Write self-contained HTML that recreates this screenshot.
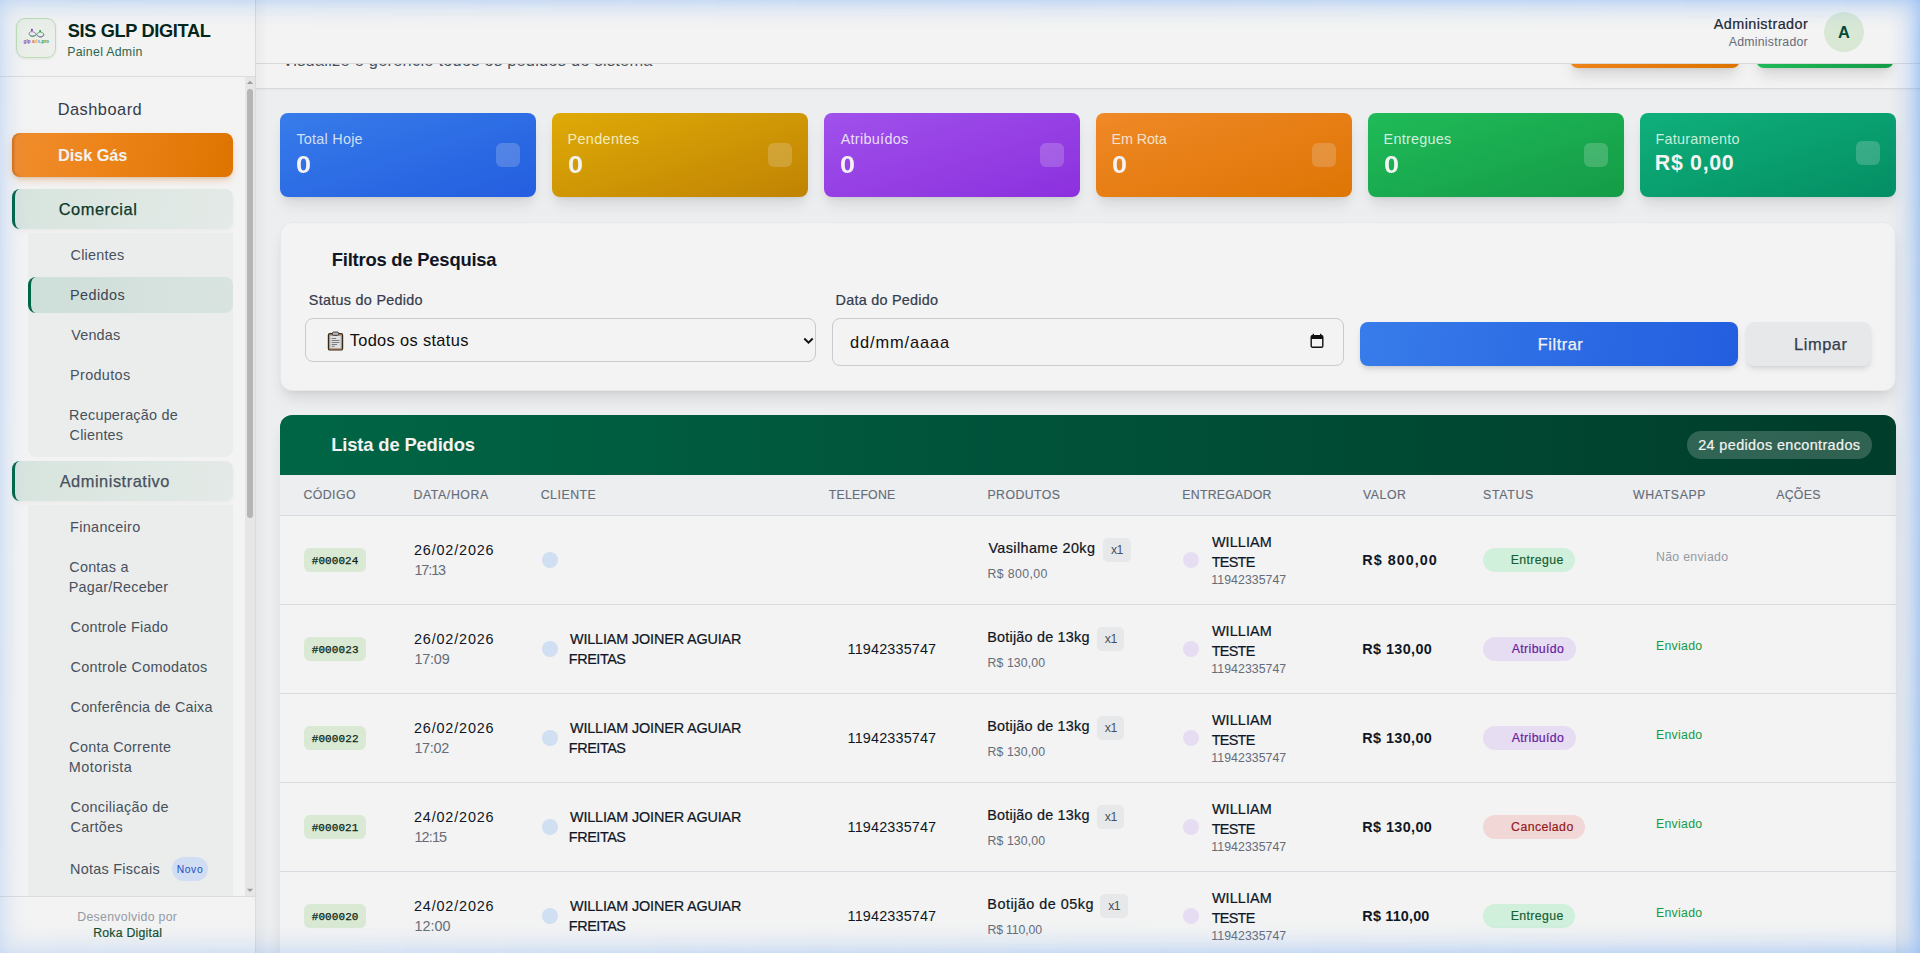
<!DOCTYPE html><html lang="pt-BR"><head><meta charset="utf-8"><title>SIS GLP DIGITAL - Pedidos</title><style>
html,body{margin:0;padding:0}
body{width:1920px;height:953px;overflow:hidden;position:relative;background:#f9fafb;font-family:"Liberation Sans",sans-serif}
aside div,section div,header div,main div,.ov{position:absolute;box-sizing:content-box}
.t{position:absolute;white-space:nowrap;margin:0;text-decoration:none;display:block;font-family:"Liberation Sans",sans-serif;font-weight:400;line-height:1}
.m{font-family:"Liberation Mono",monospace}
.ov{pointer-events:none}
</style></head><body><aside><div style="left:0px;top:0px;width:255px;height:953px;background:#fff;border-right:1px solid #e5e7eb;"></div><div style="left:0px;top:76px;width:255px;height:0px;border-top:1px solid #e5e7eb;"></div><div style="left:16px;top:18px;width:38px;height:38px;border:1px solid #c6e8bb;border-radius:9px;background:linear-gradient(135deg,#f4faf1,#f9fbf8);box-shadow:0 1px 3px rgba(0,0,0,.08);overflow:hidden;"><svg width="40" height="40" viewBox="0 0 40 40" style="position:absolute;left:-1px;top:-1px"><g fill="none" stroke-width=".85" opacity=".9"><path d="M20.5 16.3c-2.2-3-6.3-3.6-7.3-1.2-1 2.5 4.400 4.700 7.300 1.200z" stroke="#8a4fc0"/><path d="M13.3 16.600c1.500 3 6 1.800 7.200-.3" stroke="#2f9e57"/><path d="M20.500 16.300c2.200-3 6.300-2.600 7.300-.2 1 2.500-4.400 4.700-7.300.200z" stroke="#2f9e57"/><path d="M20.700 16.700c1.500 3.300 6.300 2.800 7.000-.3" stroke="#8a4fc0"/></g><circle cx="15.900" cy="11.900" r="1.050" fill="#7b3fb5"/><circle cx="24.100" cy="13" r="1.050" fill="#2f9e57"/><text x="7.600" y="24.900" font-family="Liberation Sans, sans-serif" font-weight="700" font-size="5.300" textLength="25.400" lengthAdjust="spacingAndGlyphs"><tspan fill="#8a4fc0">glp </tspan><tspan fill="#ef6b6b">a</tspan><tspan fill="#f0bd45">d</tspan><tspan fill="#62a3f0">s</tspan><tspan fill="#3aa35c">.pro</tspan></text></svg></div><h1 class="t" style="left:67.78px;top:21.50px;font-size:18.2px;font-weight:700;color:#06281d;letter-spacing:-0.342px;">SIS GLP DIGITAL</h1><span class="t" style="left:67.19px;top:45.90px;font-size:12.3px;color:#2d6a4f;letter-spacing:0.302px;">Painel Admin</span><a class="t" style="left:57.65px;top:100.70px;font-size:16.4px;color:#374151;letter-spacing:0.489px;">Dashboard</a><div style="left:12px;top:133px;width:221px;height:44px;border-radius:8px;background:linear-gradient(100deg,#fc9430 0%,#f98b1c 40%,#e97a00 100%);box-shadow:0 4px 8px -2px rgba(220,110,0,.35),0 2px 4px -2px rgba(0,0,0,.12),inset 3px 0 2px -1px rgba(200,95,0,.55);"></div><a class="t" style="left:57.90px;top:146.50px;font-size:16.4px;font-weight:700;color:#fff;letter-spacing:-0.086px;">Disk Gás</a><div style="left:12px;top:189px;width:218px;height:40px;border-radius:8px;border-left:3px solid #006b49;background:linear-gradient(100deg,#e2f0ea,#f0f6f3);box-shadow:0 2px 4px rgba(0,0,0,.04);"></div><a class="t" style="left:58.67px;top:201.00px;font-size:16.4px;color:#0a3b2a;-webkit-text-stroke:0.25px #0a3b2a;letter-spacing:0.544px;">Comercial</a><div style="left:28px;top:233px;width:205px;height:224px;background:#f7f9f8;border-radius:0 0 8px 8px;"></div><a class="t" style="left:70.57px;top:247.70px;font-size:14.4px;color:#4b5563;letter-spacing:0.222px;">Clientes</a><div style="left:28px;top:277px;width:202px;height:36px;border-radius:8px;border-left:3px solid #006b49;background:linear-gradient(100deg,#d9eae4,#e4f0eb);"></div><a class="t" style="left:70.12px;top:287.50px;font-size:14.4px;color:#3f4856;letter-spacing:0.414px;">Pedidos</a><a class="t" style="left:71.24px;top:327.70px;font-size:14.4px;color:#4b5563;letter-spacing:0.174px;">Vendas</a><a class="t" style="left:70.12px;top:367.50px;font-size:14.4px;color:#4b5563;letter-spacing:0.342px;">Produtos</a><a class="t" style="left:69.12px;top:407.80px;font-size:14.4px;color:#4b5563;letter-spacing:0.232px;">Recuperação de</a><a class="t" style="left:69.57px;top:427.50px;font-size:14.4px;color:#4b5563;letter-spacing:0.207px;">Clientes</a><div style="left:12px;top:461px;width:218px;height:40px;border-radius:8px;border-left:3px solid #006b49;background:linear-gradient(100deg,#e2f0ea,#f0f6f3);box-shadow:0 2px 4px rgba(0,0,0,.04);"></div><a class="t" style="left:59.67px;top:472.50px;font-size:16.4px;color:#4b5563;-webkit-text-stroke:0.25px #4b5563;letter-spacing:0.522px;">Administrativo</a><div style="left:28px;top:505px;width:205px;height:391px;background:#f7f9f8;"></div><a class="t" style="left:70.12px;top:519.50px;font-size:14.4px;color:#4b5563;letter-spacing:0.320px;">Financeiro</a><a class="t" style="left:69.27px;top:560.00px;font-size:14.4px;color:#4b5563;letter-spacing:0.232px;">Contas a</a><a class="t" style="left:68.82px;top:580.00px;font-size:14.4px;color:#4b5563;letter-spacing:0.210px;">Pagar/Receber</a><a class="t" style="left:70.57px;top:620.00px;font-size:14.4px;color:#4b5563;letter-spacing:0.227px;">Controle Fiado</a><a class="t" style="left:70.57px;top:660.00px;font-size:14.4px;color:#4b5563;letter-spacing:0.280px;">Controle Comodatos</a><a class="t" style="left:70.57px;top:700.00px;font-size:14.4px;color:#4b5563;letter-spacing:0.186px;">Conferência de Caixa</a><a class="t" style="left:69.27px;top:740.00px;font-size:14.4px;color:#4b5563;letter-spacing:0.252px;">Conta Corrente</a><a class="t" style="left:68.82px;top:760.00px;font-size:14.4px;color:#4b5563;letter-spacing:0.474px;">Motorista</a><a class="t" style="left:70.57px;top:799.80px;font-size:14.4px;color:#4b5563;letter-spacing:0.282px;">Conciliação de</a><a class="t" style="left:70.57px;top:819.80px;font-size:14.4px;color:#4b5563;letter-spacing:0.277px;">Cartões</a><a class="t" style="left:70.12px;top:861.70px;font-size:14.4px;color:#4b5563;letter-spacing:0.261px;">Notas Fiscais</a><div style="left:171.7px;top:857px;width:36px;height:24px;border-radius:12px;background:#dbe8fe;"></div><span class="t" style="left:176.66px;top:864.80px;font-size:10.3px;color:#2250d0;letter-spacing:0.644px;">Novo</span><div style="left:245px;top:77px;width:10px;height:819px;background:#f2f2f2;"></div><div style="left:247px;top:89px;width:6px;height:429px;background:#bebebe;border-radius:3px;"></div><svg style="position:absolute;left:246px;top:80px" width="8" height="5" viewBox="0 0 8 5"><path d="M0.800 4L4 .8 7.200 4z" fill="#a6a6a6"/></svg><svg style="position:absolute;left:246px;top:888px" width="8" height="5" viewBox="0 0 8 5"><path d="M0.800 .8L4 4 7.200 .8z" fill="#a6a6a6"/></svg><div style="left:0px;top:896px;width:255px;height:57px;background:#fff;border-top:1px solid #e5e7eb;box-sizing:border-box;"></div><span class="t" style="left:77.29px;top:910.70px;font-size:12.3px;color:#9ca3af;letter-spacing:0.307px;">Desenvolvido por</span><span class="t" style="left:93.19px;top:926.50px;font-size:12.3px;color:#14532d;-webkit-text-stroke:0.18px #14532d;letter-spacing:0.230px;">Roka Digital</span></aside><section><div style="left:256px;top:0px;width:1664px;height:88px;background:#fff;border-bottom:1px solid #e2e4e8;box-shadow:0 1px 2px rgba(0,0,0,.04);"></div><p class="t" style="left:282.43px;top:52.00px;font-size:16.4px;color:#4b5563;letter-spacing:0.242px;">Visualize e gerencie todos os pedidos do sistema</p><div style="left:1570px;top:20px;width:169.5px;height:47.8px;border-radius:8px;background:linear-gradient(100deg,#f98b1c,#e97a00);box-shadow:0 10px 15px -3px rgba(0,0,0,.12),0 4px 6px -4px rgba(0,0,0,.1);"></div><div style="left:1756px;top:20px;width:137.8px;height:47.8px;border-radius:8px;background:linear-gradient(100deg,#22c55e,#16a34a);box-shadow:0 10px 15px -3px rgba(0,0,0,.12),0 4px 6px -4px rgba(0,0,0,.1);"></div></section><header><div style="left:256px;top:0px;width:1664px;height:63px;background:#fff;border-bottom:1px solid #e2e4e8;"></div><span class="t" style="left:1713.77px;top:17.20px;font-size:14.4px;color:#1f2937;-webkit-text-stroke:0.22px #1f2937;letter-spacing:0.432px;">Administrador</span><span class="t" style="left:1728.68px;top:35.80px;font-size:12.3px;color:#6b7280;letter-spacing:0.264px;">Administrador</span><div style="left:1823.7px;top:12px;width:40px;height:40px;border-radius:50%;background:#e3f4e0;"></div><span class="t" style="left:1837.89px;top:24.00px;font-size:16.4px;font-weight:700;color:#064e3b;">A</span></header><main><div style="left:280px;top:113px;width:256px;height:84px;border-radius:8px;background:linear-gradient(to bottom right,#3b82f6,#2563eb);box-shadow:0 10px 15px -3px rgba(0,0,0,.1),0 4px 6px -4px rgba(0,0,0,.1);"></div><span class="t" style="left:296.38px;top:132.20px;font-size:14.4px;color:#dbeafe;letter-spacing:0.251px;">Total Hoje</span><span class="t" style="left:296.03px;top:153.00px;font-size:24.6px;font-weight:700;color:#fff;transform:scaleX(1.1);transform-origin:0 0;">0</span><div style="left:496px;top:143px;width:24px;height:24px;border-radius:6px;background:rgba(255,255,255,.2);"></div><div style="left:552px;top:113px;width:256px;height:84px;border-radius:8px;background:linear-gradient(to bottom right,#eab308,#ca8a04);box-shadow:0 10px 15px -3px rgba(0,0,0,.1),0 4px 6px -4px rgba(0,0,0,.1);"></div><span class="t" style="left:567.52px;top:132.20px;font-size:14.4px;color:#fef9c3;letter-spacing:0.361px;">Pendentes</span><span class="t" style="left:568.03px;top:153.00px;font-size:24.6px;font-weight:700;color:#fff;transform:scaleX(1.1);transform-origin:0 0;">0</span><div style="left:768px;top:143px;width:24px;height:24px;border-radius:6px;background:rgba(255,255,255,.2);"></div><div style="left:824px;top:113px;width:256px;height:84px;border-radius:8px;background:linear-gradient(to bottom right,#a855f7,#9333ea);box-shadow:0 10px 15px -3px rgba(0,0,0,.1),0 4px 6px -4px rgba(0,0,0,.1);"></div><span class="t" style="left:840.67px;top:132.20px;font-size:14.4px;color:#f3e8ff;letter-spacing:0.306px;">Atribuídos</span><span class="t" style="left:840.03px;top:153.00px;font-size:24.6px;font-weight:700;color:#fff;transform:scaleX(1.1);transform-origin:0 0;">0</span><div style="left:1040px;top:143px;width:24px;height:24px;border-radius:6px;background:rgba(255,255,255,.2);"></div><div style="left:1096px;top:113px;width:256px;height:84px;border-radius:8px;background:linear-gradient(to bottom right,#fc9029,#e97b05);box-shadow:0 10px 15px -3px rgba(0,0,0,.1),0 4px 6px -4px rgba(0,0,0,.1);"></div><span class="t" style="left:1111.52px;top:132.20px;font-size:14.4px;color:#ffedd5;letter-spacing:-0.134px;">Em Rota</span><span class="t" style="left:1112.03px;top:153.00px;font-size:24.6px;font-weight:700;color:#fff;transform:scaleX(1.1);transform-origin:0 0;">0</span><div style="left:1312px;top:143px;width:24px;height:24px;border-radius:6px;background:rgba(255,255,255,.2);"></div><div style="left:1368px;top:113px;width:256px;height:84px;border-radius:8px;background:linear-gradient(to bottom right,#22c55e,#16a34a);box-shadow:0 10px 15px -3px rgba(0,0,0,.1),0 4px 6px -4px rgba(0,0,0,.1);"></div><span class="t" style="left:1383.52px;top:132.20px;font-size:14.4px;color:#dcfce7;letter-spacing:0.262px;">Entregues</span><span class="t" style="left:1384.03px;top:153.00px;font-size:24.6px;font-weight:700;color:#fff;transform:scaleX(1.1);transform-origin:0 0;">0</span><div style="left:1584px;top:143px;width:24px;height:24px;border-radius:6px;background:rgba(255,255,255,.2);"></div><div style="left:1640px;top:113px;width:256px;height:84px;border-radius:8px;background:linear-gradient(to bottom right,#10b981,#059669);box-shadow:0 10px 15px -3px rgba(0,0,0,.1),0 4px 6px -4px rgba(0,0,0,.1);"></div><span class="t" style="left:1655.52px;top:132.20px;font-size:14.4px;color:#d1fae5;letter-spacing:0.249px;">Faturamento</span><span class="t" style="left:1654.87px;top:153.00px;font-size:21.4px;font-weight:700;color:#fff;letter-spacing:0.648px;">R$ 0,00</span><div style="left:1856px;top:141px;width:24px;height:24px;border-radius:6px;background:rgba(255,255,255,.2);"></div><div style="left:280px;top:221.5px;width:1614px;height:167px;border:1px solid #f3f4f6;border-radius:12px;background:#fff;box-shadow:0 10px 15px -3px rgba(0,0,0,.1),0 4px 6px -4px rgba(0,0,0,.08);"></div><h3 class="t" style="left:331.77px;top:250.50px;font-size:18.4px;font-weight:700;color:#111827;letter-spacing:-0.213px;">Filtros de Pesquisa</h3><label class="t" style="left:308.85px;top:293.00px;font-size:14.4px;color:#374151;-webkit-text-stroke:0.22px #374151;letter-spacing:0.277px;">Status do Pedido</label><label class="t" style="left:835.52px;top:293.00px;font-size:14.4px;color:#374151;-webkit-text-stroke:0.22px #374151;letter-spacing:0.259px;">Data do Pedido</label><div style="left:305px;top:318px;width:509px;height:42px;border:1px solid #d1d5db;border-radius:8px;background:#fff;"><svg style="position:absolute;left:21px;top:11.500px" width="17" height="20" viewBox="0 0 17 20"><rect x="1.400" y="2.600" width="14.200" height="16.400" rx="1.600" fill="#c9a27a" stroke="#3a2919" stroke-width="1.200"/><rect x="3" y="4.600" width="11" height="12.800" fill="#ececec" stroke="#8a8a8a" stroke-width=".4"/><rect x="5.400" y="1" width="6.200" height="3.400" rx="1.200" fill="#bdbdbd" stroke="#3a3a3a" stroke-width=".9"/><path d="M4.600 7.500h4.500M4.600 9.500h7.800M4.600 11.500h7.800M4.600 13.500h5.500M4.600 15.300h3" stroke="#6a6a6a" stroke-width=".8"/></svg><svg style="position:absolute;left:496.500px;top:17.500px" width="11" height="8" viewBox="0 0 11 8"><path d="M1.300 1.500L5.500 5.700 9.700 1.500" fill="none" stroke="#111" stroke-width="1.900"/></svg></div><span class="t" style="left:349.63px;top:331.80px;font-size:16.4px;color:#111;letter-spacing:0.348px;">Todos os status</span><div style="left:832px;top:318px;width:510px;height:46px;border:1px solid #d1d5db;border-radius:8px;background:#fff;"><svg style="position:absolute;left:477.300px;top:14.200px" width="14" height="16" viewBox="0 0 14 16"><path d="M3.300 .8v2M10.700 .8v2" stroke="#111" stroke-width="1.300"/><rect x="1.200" y="2.600" width="11.600" height="11.600" rx="1.300" fill="none" stroke="#111" stroke-width="1.400"/><rect x="1.200" y="2.600" width="11.600" height="3.400" fill="#111"/></svg></div><span class="t" style="left:850.11px;top:333.50px;font-size:16.4px;color:#111;letter-spacing:0.864px;">dd/mm/aaaa</span><div style="left:1360px;top:322px;width:378px;height:44px;border-radius:8px;background:linear-gradient(100deg,#3b82f6,#2563eb);box-shadow:0 4px 6px -1px rgba(0,0,0,.12),0 2px 4px -2px rgba(0,0,0,.1);"></div><span class="t" style="left:1537.85px;top:336.00px;font-size:16.4px;color:#fff;-webkit-text-stroke:0.25px #fff;letter-spacing:0.504px;">Filtrar</span><div style="left:1746px;top:322px;width:125px;height:44px;border-radius:8px;background:#f3f4f6;box-shadow:0 4px 6px -1px rgba(0,0,0,.1),0 2px 4px -2px rgba(0,0,0,.08);"></div><span class="t" style="left:1794.05px;top:335.70px;font-size:16.4px;color:#374151;-webkit-text-stroke:0.25px #374151;letter-spacing:0.562px;">Limpar</span><div style="left:280px;top:415px;width:1616px;height:560px;border-radius:12px;background:#fff;box-shadow:0 10px 15px -3px rgba(0,0,0,.1);overflow:hidden;"><div style="left:0px;top:0px;width:1616px;height:60px;background:linear-gradient(90deg,#006b49,#00402d);"></div><div style="left:0px;top:60px;width:1616px;height:40px;background:#f9fafb;border-bottom:1px solid #e2e5ea;"></div></div><h3 class="t" style="left:331.27px;top:435.80px;font-size:18.4px;font-weight:700;color:#fff;letter-spacing:-0.164px;">Lista de Pedidos</h3><div style="left:1687.4px;top:431.2px;width:185px;height:27.8px;border-radius:14px;background:rgba(255,255,255,.2);"></div><span class="t" style="left:1698.18px;top:438.00px;font-size:14.4px;color:#fff;-webkit-text-stroke:0.22px #fff;letter-spacing:0.391px;">24 pedidos encontrados</span><b class="t" style="left:303.38px;top:488.80px;font-size:12.3px;color:#6b7280;letter-spacing:0.468px;font-weight:400;-webkit-text-stroke:.15px #6b7280;">CÓDIGO</b><b class="t" style="left:413.49px;top:488.80px;font-size:12.3px;color:#6b7280;letter-spacing:0.601px;font-weight:400;-webkit-text-stroke:.15px #6b7280;">DATA/HORA</b><b class="t" style="left:540.68px;top:488.80px;font-size:12.3px;color:#6b7280;letter-spacing:0.536px;font-weight:400;-webkit-text-stroke:.15px #6b7280;">CLIENTE</b><b class="t" style="left:828.72px;top:488.80px;font-size:12.3px;color:#6b7280;letter-spacing:0.226px;font-weight:400;-webkit-text-stroke:.15px #6b7280;">TELEFONE</b><b class="t" style="left:987.49px;top:488.80px;font-size:12.3px;color:#6b7280;letter-spacing:0.429px;font-weight:400;-webkit-text-stroke:.15px #6b7280;">PRODUTOS</b><b class="t" style="left:1182.29px;top:488.80px;font-size:12.3px;color:#6b7280;letter-spacing:0.266px;font-weight:400;-webkit-text-stroke:.15px #6b7280;">ENTREGADOR</b><b class="t" style="left:1363.05px;top:488.80px;font-size:12.3px;color:#6b7280;letter-spacing:0.536px;font-weight:400;-webkit-text-stroke:.15px #6b7280;">VALOR</b><b class="t" style="left:1483.04px;top:488.80px;font-size:12.3px;color:#6b7280;letter-spacing:0.707px;font-weight:400;-webkit-text-stroke:.15px #6b7280;">STATUS</b><b class="t" style="left:1633.05px;top:488.80px;font-size:12.3px;color:#6b7280;letter-spacing:0.628px;font-weight:400;-webkit-text-stroke:.15px #6b7280;">WHATSAPP</b><b class="t" style="left:1776.18px;top:488.80px;font-size:12.3px;color:#6b7280;letter-spacing:0.282px;font-weight:400;-webkit-text-stroke:.15px #6b7280;">AÇÕES</b><div style="left:304.2px;top:548px;width:61.6px;height:24px;border-radius:6px;background:#e4f5de;"></div><span class="t m" style="left:311.71px;top:555.70px;font-size:11px;color:#0c2617;letter-spacing:0.072px;-webkit-text-stroke:.25px #0c2617;">#000024</span><span class="t" style="left:413.98px;top:542.70px;font-size:14.4px;color:#111827;letter-spacing:0.847px;">26/02/2026</span><span class="t" style="left:414.40px;top:562.70px;font-size:14.4px;color:#6b7280;letter-spacing:-1.071px;">17:13</span><div style="left:541.7px;top:552px;width:16px;height:16px;border-radius:50%;background:#dbeafe;"></div><span class="t" style="left:988.44px;top:540.70px;font-size:14.4px;color:#111827;-webkit-text-stroke:0.22px #111827;letter-spacing:0.397px;">Vasilhame 20kg</span><div style="left:1102.8px;top:538px;width:27.8px;height:24px;border-radius:5px;background:#f3f4f6;"></div><span class="t" style="left:1110.96px;top:544.00px;font-size:12.3px;color:#4b5563;letter-spacing:-0.561px;">x1</span><span class="t" style="left:987.49px;top:567.70px;font-size:12.3px;color:#6b7280;letter-spacing:0.380px;">R$ 800,00</span><div style="left:1182.8px;top:552px;width:16px;height:16px;border-radius:50%;background:#f3e8ff;"></div><span class="t" style="left:1211.94px;top:534.80px;font-size:14.4px;color:#111827;-webkit-text-stroke:0.22px #111827;letter-spacing:0.095px;">WILLIAM</span><span class="t" style="left:1211.68px;top:554.50px;font-size:14.4px;color:#111827;-webkit-text-stroke:0.22px #111827;letter-spacing:-0.687px;">TESTE</span><span class="t" style="left:1211.36px;top:573.80px;font-size:12.3px;color:#6b7280;letter-spacing:0.053px;">11942335747</span><span class="t" style="left:1362.34px;top:552.70px;font-size:14.4px;font-weight:700;color:#111827;letter-spacing:1.017px;">R$ 800,00</span><div style="left:1483px;top:548px;width:91.7px;height:24px;border-radius:12px;background:#dcfce7;"></div><span class="t" style="left:1510.69px;top:554.00px;font-size:12.3px;color:#166534;-webkit-text-stroke:0.18px #166534;letter-spacing:0.376px;">Entregue</span><span class="t" style="left:1655.99px;top:550.60px;font-size:12.3px;color:#9ca3af;letter-spacing:0.296px;">Não enviado</span><div style="left:280px;top:604px;width:1616px;height:0px;border-top:1px solid #e2e5ea;"></div><div style="left:304.2px;top:637px;width:61.6px;height:24px;border-radius:6px;background:#e4f5de;"></div><span class="t m" style="left:311.71px;top:644.70px;font-size:11px;color:#0c2617;letter-spacing:0.095px;-webkit-text-stroke:.25px #0c2617;">#000023</span><span class="t" style="left:413.98px;top:631.70px;font-size:14.4px;color:#111827;letter-spacing:0.847px;">26/02/2026</span><span class="t" style="left:414.40px;top:651.70px;font-size:14.4px;color:#6b7280;letter-spacing:-0.184px;">17:09</span><div style="left:541.7px;top:641px;width:16px;height:16px;border-radius:50%;background:#dbeafe;"></div><span class="t" style="left:569.94px;top:632.20px;font-size:14.4px;color:#111827;-webkit-text-stroke:0.22px #111827;letter-spacing:-0.140px;">WILLIAM JOINER AGUIAR</span><span class="t" style="left:568.82px;top:651.80px;font-size:14.4px;color:#111827;-webkit-text-stroke:0.22px #111827;letter-spacing:-0.427px;">FREITAS</span><span class="t" style="left:847.60px;top:641.80px;font-size:14.4px;color:#111827;letter-spacing:0.155px;">11942335747</span><span class="t" style="left:987.32px;top:629.70px;font-size:14.4px;color:#111827;-webkit-text-stroke:0.22px #111827;letter-spacing:0.206px;">Botijão de 13kg</span><div style="left:1096.7px;top:627px;width:27.8px;height:24px;border-radius:5px;background:#f3f4f6;"></div><span class="t" style="left:1104.86px;top:633.00px;font-size:12.3px;color:#4b5563;letter-spacing:-0.561px;">x1</span><span class="t" style="left:987.49px;top:656.70px;font-size:12.3px;color:#6b7280;letter-spacing:0.092px;">R$ 130,00</span><div style="left:1182.8px;top:641px;width:16px;height:16px;border-radius:50%;background:#f3e8ff;"></div><span class="t" style="left:1211.94px;top:623.80px;font-size:14.4px;color:#111827;-webkit-text-stroke:0.22px #111827;letter-spacing:0.095px;">WILLIAM</span><span class="t" style="left:1211.68px;top:643.50px;font-size:14.4px;color:#111827;-webkit-text-stroke:0.22px #111827;letter-spacing:-0.687px;">TESTE</span><span class="t" style="left:1211.36px;top:662.80px;font-size:12.3px;color:#6b7280;letter-spacing:0.053px;">11942335747</span><span class="t" style="left:1362.34px;top:641.70px;font-size:14.4px;font-weight:700;color:#111827;letter-spacing:0.392px;">R$ 130,00</span><div style="left:1483px;top:637px;width:92.8px;height:24px;border-radius:12px;background:#f3e8ff;"></div><span class="t" style="left:1511.68px;top:643.00px;font-size:12.3px;color:#6b21a8;-webkit-text-stroke:0.18px #6b21a8;letter-spacing:0.378px;">Atribuído</span><span class="t" style="left:1655.99px;top:639.60px;font-size:12.3px;color:#16a34a;letter-spacing:0.295px;">Enviado</span><div style="left:280px;top:693px;width:1616px;height:0px;border-top:1px solid #e2e5ea;"></div><div style="left:304.2px;top:726px;width:61.6px;height:24px;border-radius:6px;background:#e4f5de;"></div><span class="t m" style="left:311.71px;top:733.70px;font-size:11px;color:#0c2617;letter-spacing:0.108px;-webkit-text-stroke:.25px #0c2617;">#000022</span><span class="t" style="left:413.98px;top:720.70px;font-size:14.4px;color:#111827;letter-spacing:0.847px;">26/02/2026</span><span class="t" style="left:414.40px;top:740.70px;font-size:14.4px;color:#6b7280;letter-spacing:-0.299px;">17:02</span><div style="left:541.7px;top:730px;width:16px;height:16px;border-radius:50%;background:#dbeafe;"></div><span class="t" style="left:569.94px;top:721.20px;font-size:14.4px;color:#111827;-webkit-text-stroke:0.22px #111827;letter-spacing:-0.140px;">WILLIAM JOINER AGUIAR</span><span class="t" style="left:568.82px;top:740.80px;font-size:14.4px;color:#111827;-webkit-text-stroke:0.22px #111827;letter-spacing:-0.427px;">FREITAS</span><span class="t" style="left:847.60px;top:730.80px;font-size:14.4px;color:#111827;letter-spacing:0.155px;">11942335747</span><span class="t" style="left:987.32px;top:718.70px;font-size:14.4px;color:#111827;-webkit-text-stroke:0.22px #111827;letter-spacing:0.206px;">Botijão de 13kg</span><div style="left:1096.7px;top:716px;width:27.8px;height:24px;border-radius:5px;background:#f3f4f6;"></div><span class="t" style="left:1104.86px;top:722.00px;font-size:12.3px;color:#4b5563;letter-spacing:-0.561px;">x1</span><span class="t" style="left:987.49px;top:745.70px;font-size:12.3px;color:#6b7280;letter-spacing:0.092px;">R$ 130,00</span><div style="left:1182.8px;top:730px;width:16px;height:16px;border-radius:50%;background:#f3e8ff;"></div><span class="t" style="left:1211.94px;top:712.80px;font-size:14.4px;color:#111827;-webkit-text-stroke:0.22px #111827;letter-spacing:0.095px;">WILLIAM</span><span class="t" style="left:1211.68px;top:732.50px;font-size:14.4px;color:#111827;-webkit-text-stroke:0.22px #111827;letter-spacing:-0.687px;">TESTE</span><span class="t" style="left:1211.36px;top:751.80px;font-size:12.3px;color:#6b7280;letter-spacing:0.053px;">11942335747</span><span class="t" style="left:1362.34px;top:730.70px;font-size:14.4px;font-weight:700;color:#111827;letter-spacing:0.392px;">R$ 130,00</span><div style="left:1483px;top:726px;width:92.8px;height:24px;border-radius:12px;background:#f3e8ff;"></div><span class="t" style="left:1511.68px;top:732.00px;font-size:12.3px;color:#6b21a8;-webkit-text-stroke:0.18px #6b21a8;letter-spacing:0.378px;">Atribuído</span><span class="t" style="left:1655.99px;top:728.60px;font-size:12.3px;color:#16a34a;letter-spacing:0.295px;">Enviado</span><div style="left:280px;top:782px;width:1616px;height:0px;border-top:1px solid #e2e5ea;"></div><div style="left:304.2px;top:815px;width:61.6px;height:24px;border-radius:6px;background:#e4f5de;"></div><span class="t m" style="left:311.71px;top:822.70px;font-size:11px;color:#0c2617;letter-spacing:0.067px;-webkit-text-stroke:.25px #0c2617;">#000021</span><span class="t" style="left:413.98px;top:809.70px;font-size:14.4px;color:#111827;letter-spacing:0.847px;">24/02/2026</span><span class="t" style="left:414.40px;top:829.70px;font-size:14.4px;color:#6b7280;letter-spacing:-0.829px;">12:15</span><div style="left:541.7px;top:819px;width:16px;height:16px;border-radius:50%;background:#dbeafe;"></div><span class="t" style="left:569.94px;top:810.20px;font-size:14.4px;color:#111827;-webkit-text-stroke:0.22px #111827;letter-spacing:-0.140px;">WILLIAM JOINER AGUIAR</span><span class="t" style="left:568.82px;top:829.80px;font-size:14.4px;color:#111827;-webkit-text-stroke:0.22px #111827;letter-spacing:-0.427px;">FREITAS</span><span class="t" style="left:847.60px;top:819.80px;font-size:14.4px;color:#111827;letter-spacing:0.155px;">11942335747</span><span class="t" style="left:987.32px;top:807.70px;font-size:14.4px;color:#111827;-webkit-text-stroke:0.22px #111827;letter-spacing:0.206px;">Botijão de 13kg</span><div style="left:1096.7px;top:805px;width:27.8px;height:24px;border-radius:5px;background:#f3f4f6;"></div><span class="t" style="left:1104.86px;top:811.00px;font-size:12.3px;color:#4b5563;letter-spacing:-0.561px;">x1</span><span class="t" style="left:987.49px;top:834.70px;font-size:12.3px;color:#6b7280;letter-spacing:0.092px;">R$ 130,00</span><div style="left:1182.8px;top:819px;width:16px;height:16px;border-radius:50%;background:#f3e8ff;"></div><span class="t" style="left:1211.94px;top:801.80px;font-size:14.4px;color:#111827;-webkit-text-stroke:0.22px #111827;letter-spacing:0.095px;">WILLIAM</span><span class="t" style="left:1211.68px;top:821.50px;font-size:14.4px;color:#111827;-webkit-text-stroke:0.22px #111827;letter-spacing:-0.687px;">TESTE</span><span class="t" style="left:1211.36px;top:840.80px;font-size:12.3px;color:#6b7280;letter-spacing:0.053px;">11942335747</span><span class="t" style="left:1362.34px;top:819.70px;font-size:14.4px;font-weight:700;color:#111827;letter-spacing:0.392px;">R$ 130,00</span><div style="left:1483px;top:815px;width:101.8px;height:24px;border-radius:12px;background:#fee2e2;"></div><span class="t" style="left:1511.08px;top:821.00px;font-size:12.3px;color:#991b1b;-webkit-text-stroke:0.18px #991b1b;letter-spacing:0.418px;">Cancelado</span><span class="t" style="left:1655.99px;top:817.60px;font-size:12.3px;color:#16a34a;letter-spacing:0.295px;">Enviado</span><div style="left:280px;top:871px;width:1616px;height:0px;border-top:1px solid #e2e5ea;"></div><div style="left:304.2px;top:904px;width:61.6px;height:24px;border-radius:6px;background:#e4f5de;"></div><span class="t m" style="left:311.71px;top:911.70px;font-size:11px;color:#0c2617;letter-spacing:0.091px;-webkit-text-stroke:.25px #0c2617;">#000020</span><span class="t" style="left:413.98px;top:898.70px;font-size:14.4px;color:#111827;letter-spacing:0.847px;">24/02/2026</span><span class="t" style="left:414.40px;top:918.70px;font-size:14.4px;color:#6b7280;letter-spacing:0.036px;">12:00</span><div style="left:541.7px;top:908px;width:16px;height:16px;border-radius:50%;background:#dbeafe;"></div><span class="t" style="left:569.94px;top:899.20px;font-size:14.4px;color:#111827;-webkit-text-stroke:0.22px #111827;letter-spacing:-0.140px;">WILLIAM JOINER AGUIAR</span><span class="t" style="left:568.82px;top:918.80px;font-size:14.4px;color:#111827;-webkit-text-stroke:0.22px #111827;letter-spacing:-0.427px;">FREITAS</span><span class="t" style="left:847.60px;top:908.80px;font-size:14.4px;color:#111827;letter-spacing:0.155px;">11942335747</span><span class="t" style="left:987.32px;top:896.70px;font-size:14.4px;color:#111827;-webkit-text-stroke:0.22px #111827;letter-spacing:0.492px;">Botijão de 05kg</span><div style="left:1100px;top:894px;width:27.8px;height:24px;border-radius:5px;background:#f3f4f6;"></div><span class="t" style="left:1108.16px;top:900.00px;font-size:12.3px;color:#4b5563;letter-spacing:-0.561px;">x1</span><span class="t" style="left:987.49px;top:923.70px;font-size:12.3px;color:#6b7280;letter-spacing:-0.169px;">R$ 110,00</span><div style="left:1182.8px;top:908px;width:16px;height:16px;border-radius:50%;background:#f3e8ff;"></div><span class="t" style="left:1211.94px;top:890.80px;font-size:14.4px;color:#111827;-webkit-text-stroke:0.22px #111827;letter-spacing:0.095px;">WILLIAM</span><span class="t" style="left:1211.68px;top:910.50px;font-size:14.4px;color:#111827;-webkit-text-stroke:0.22px #111827;letter-spacing:-0.687px;">TESTE</span><span class="t" style="left:1211.36px;top:929.80px;font-size:12.3px;color:#6b7280;letter-spacing:0.053px;">11942335747</span><span class="t" style="left:1362.34px;top:908.70px;font-size:14.4px;font-weight:700;color:#111827;letter-spacing:0.179px;">R$ 110,00</span><div style="left:1483px;top:904px;width:91.7px;height:24px;border-radius:12px;background:#dcfce7;"></div><span class="t" style="left:1510.69px;top:910.00px;font-size:12.3px;color:#166534;-webkit-text-stroke:0.18px #166534;letter-spacing:0.376px;">Entregue</span><span class="t" style="left:1655.99px;top:906.60px;font-size:12.3px;color:#16a34a;letter-spacing:0.295px;">Enviado</span></main><div class="ov" style="left:256px;top:0;width:12px;height:953px;z-index:40;background:linear-gradient(to right,rgba(0,0,0,.03),rgba(0,0,0,0))"></div><div class="ov" style="left:0;top:0;width:1920px;height:953px;background:rgba(0,0,0,.047);z-index:50"></div><div class="ov" style="left:0;top:0;width:1920px;height:30px;z-index:51;background:linear-gradient(to right,rgba(82,152,247,0.176),rgba(82,152,247,0.234) 29px,rgba(82,152,247,0.327) calc(100% - 34px),rgba(82,152,247,0.245));-webkit-mask-image:linear-gradient(to bottom,rgba(0,0,0,1) 0.0%,rgba(0,0,0,0.78) 11.1%,rgba(0,0,0,0.58) 22.2%,rgba(0,0,0,0.42) 33.3%,rgba(0,0,0,0.29) 44.4%,rgba(0,0,0,0.19) 55.6%,rgba(0,0,0,0.115) 66.7%,rgba(0,0,0,0.06) 77.8%,rgba(0,0,0,0.025) 88.9%,rgba(0,0,0,0) 100.0%);mask-image:linear-gradient(to bottom,rgba(0,0,0,1) 0.0%,rgba(0,0,0,0.78) 11.1%,rgba(0,0,0,0.58) 22.2%,rgba(0,0,0,0.42) 33.3%,rgba(0,0,0,0.29) 44.4%,rgba(0,0,0,0.19) 55.6%,rgba(0,0,0,0.115) 66.7%,rgba(0,0,0,0.06) 77.8%,rgba(0,0,0,0.025) 88.9%,rgba(0,0,0,0) 100.0%)"></div><div class="ov" style="left:0;top:920px;width:1920px;height:33px;z-index:51;background:linear-gradient(to right,rgba(82,152,247,0.131),rgba(82,152,247,0.174) 29px,rgba(82,152,247,0.316) calc(100% - 34px),rgba(82,152,247,0.237));-webkit-mask-image:linear-gradient(to top,rgba(0,0,0,1) 0.0%,rgba(0,0,0,0.78) 11.1%,rgba(0,0,0,0.58) 22.2%,rgba(0,0,0,0.42) 33.3%,rgba(0,0,0,0.29) 44.4%,rgba(0,0,0,0.19) 55.6%,rgba(0,0,0,0.115) 66.7%,rgba(0,0,0,0.06) 77.8%,rgba(0,0,0,0.025) 88.9%,rgba(0,0,0,0) 100.0%);mask-image:linear-gradient(to top,rgba(0,0,0,1) 0.0%,rgba(0,0,0,0.78) 11.1%,rgba(0,0,0,0.58) 22.2%,rgba(0,0,0,0.42) 33.3%,rgba(0,0,0,0.29) 44.4%,rgba(0,0,0,0.19) 55.6%,rgba(0,0,0,0.115) 66.7%,rgba(0,0,0,0.06) 77.8%,rgba(0,0,0,0.025) 88.9%,rgba(0,0,0,0) 100.0%)"></div><div class="ov" style="left:0;top:0;width:29px;height:953px;z-index:51;background:linear-gradient(to bottom,rgba(82,152,247,0.151),rgba(82,152,247,0.202) 30px,rgba(82,152,247,0.180) calc(100% - 33px),rgba(82,152,247,0.135));-webkit-mask-image:linear-gradient(to right,rgba(0,0,0,1) 0.0%,rgba(0,0,0,0.78) 11.1%,rgba(0,0,0,0.58) 22.2%,rgba(0,0,0,0.42) 33.3%,rgba(0,0,0,0.29) 44.4%,rgba(0,0,0,0.19) 55.6%,rgba(0,0,0,0.115) 66.7%,rgba(0,0,0,0.06) 77.8%,rgba(0,0,0,0.025) 88.9%,rgba(0,0,0,0) 100.0%);mask-image:linear-gradient(to right,rgba(0,0,0,1) 0.0%,rgba(0,0,0,0.78) 11.1%,rgba(0,0,0,0.58) 22.2%,rgba(0,0,0,0.42) 33.3%,rgba(0,0,0,0.29) 44.4%,rgba(0,0,0,0.19) 55.6%,rgba(0,0,0,0.115) 66.7%,rgba(0,0,0,0.06) 77.8%,rgba(0,0,0,0.025) 88.9%,rgba(0,0,0,0) 100.0%)"></div><div class="ov" style="left:1886px;top:0;width:34px;height:953px;z-index:51;background:linear-gradient(to bottom,rgba(82,152,247,0.327),rgba(82,152,247,0.436) 30px,rgba(82,152,247,0.392) 50%,rgba(82,152,247,0.436) calc(100% - 33px),rgba(82,152,247,0.327));-webkit-mask-image:linear-gradient(to left,rgba(0,0,0,1) 0.0%,rgba(0,0,0,0.78) 11.1%,rgba(0,0,0,0.58) 22.2%,rgba(0,0,0,0.42) 33.3%,rgba(0,0,0,0.29) 44.4%,rgba(0,0,0,0.19) 55.6%,rgba(0,0,0,0.115) 66.7%,rgba(0,0,0,0.06) 77.8%,rgba(0,0,0,0.025) 88.9%,rgba(0,0,0,0) 100.0%);mask-image:linear-gradient(to left,rgba(0,0,0,1) 0.0%,rgba(0,0,0,0.78) 11.1%,rgba(0,0,0,0.58) 22.2%,rgba(0,0,0,0.42) 33.3%,rgba(0,0,0,0.29) 44.4%,rgba(0,0,0,0.19) 55.6%,rgba(0,0,0,0.115) 66.7%,rgba(0,0,0,0.06) 77.8%,rgba(0,0,0,0.025) 88.9%,rgba(0,0,0,0) 100.0%)"></div></body></html>
